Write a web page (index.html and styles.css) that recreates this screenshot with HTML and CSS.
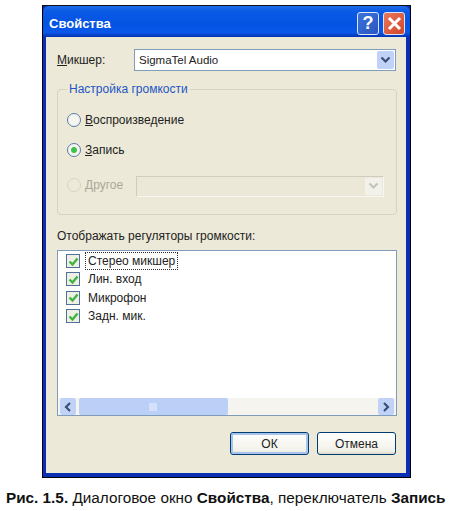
FILE: index.html
```html
<!DOCTYPE html>
<html lang="ru">
<head>
  <meta charset="UTF-8" />
  <title>Свойства</title>
  <link rel="stylesheet" href="styles.css">
</head>
<body>
  <div class="window">
    <div class="titlebar">
      <span class="title">Свойства</span>
      <span class="cap-btn help">?</span>
      <span class="cap-btn close">
        <svg width="15" height="15" viewBox="0 0 15 15"><path d="M2 2 L13 13 M13 2 L2 13" stroke="#fff" stroke-width="3"/></svg>
      </span>
    </div>
    <div class="client">
      <div class="mixer-row">
        <span class="mixer-label"><u>М</u>икшер:</span>
        <div class="combo">
          <span class="combo-text">SigmaTel Audio</span>
          <span class="combo-arrow">
            <svg width="11" height="8" viewBox="0 0 11 8"><path d="M1.5 1.5 L5.5 5.5 L9.5 1.5" fill="none" stroke="#3b4f74" stroke-width="2.2"/></svg>
          </span>
        </div>
      </div>

      <fieldset class="group">
        <legend>Настройка громкости</legend>
        <div class="radio-row first">
          <span class="radio"></span>
          <span><u>В</u>оспроизведение</span>
        </div>
        <div class="radio-row second">
          <span class="radio on"></span>
          <span><u>З</u>апись</span>
        </div>
        <div class="radio-row third disabled">
          <span class="radio"></span>
          <span class="other-label"><u>Д</u>ругое</span>
          <div class="combo-off">
            <span class="combo-off-arrow">
              <svg width="11" height="8" viewBox="0 0 11 8"><path d="M1.5 1.5 L5.5 5.5 L9.5 1.5" fill="none" stroke="#c4c4bc" stroke-width="2.2"/></svg>
            </span>
          </div>
        </div>
      </fieldset>

      <div class="list-label">Отображать регуляторы громкости:</div>
      <div class="list">
        <div class="list-items">
          <div class="item">
            <span class="check"><svg width="11" height="11" viewBox="0 0 11 11"><path d="M1.5 5.5 L4.5 8.5 L9.5 2.5" fill="none" stroke="#3fb53f" stroke-width="2.4"/></svg></span>
            <span class="item-text focused">Стерео микшер</span>
          </div>
          <div class="item">
            <span class="check"><svg width="11" height="11" viewBox="0 0 11 11"><path d="M1.5 5.5 L4.5 8.5 L9.5 2.5" fill="none" stroke="#3fb53f" stroke-width="2.4"/></svg></span>
            <span class="item-text">Лин. вход</span>
          </div>
          <div class="item">
            <span class="check"><svg width="11" height="11" viewBox="0 0 11 11"><path d="M1.5 5.5 L4.5 8.5 L9.5 2.5" fill="none" stroke="#3fb53f" stroke-width="2.4"/></svg></span>
            <span class="item-text">Микрофон</span>
          </div>
          <div class="item">
            <span class="check"><svg width="11" height="11" viewBox="0 0 11 11"><path d="M1.5 5.5 L4.5 8.5 L9.5 2.5" fill="none" stroke="#3fb53f" stroke-width="2.4"/></svg></span>
            <span class="item-text">Задн. мик.</span>
          </div>
        </div>
        <div class="scrollbar">
          <span class="sb-btn">
            <svg width="8" height="10" viewBox="0 0 8 10"><path d="M6 1 L2 5 L6 9" fill="none" stroke="#3b4f74" stroke-width="2.2"/></svg>
          </span>
          <span class="sb-thumb">
            <svg width="9" height="8" viewBox="0 0 9 8"><path d="M1 0 V8 M3 0 V8 M5 0 V8 M7 0 V8" stroke="#eef2fd" stroke-width="1"/></svg>
          </span>
          <span class="sb-track"></span>
          <span class="sb-btn">
            <svg width="8" height="10" viewBox="0 0 8 10"><path d="M2 1 L6 5 L2 9" fill="none" stroke="#3b4f74" stroke-width="2.2"/></svg>
          </span>
        </div>
      </div>

      <div class="buttons">
        <div class="btn default">ОК</div>
        <div class="btn">Отмена</div>
      </div>
    </div>
  </div>
  <p class="caption"><b>Рис. 1.5.</b> Диалоговое окно <b>Свойства</b>, переключатель <b>Запись</b></p>
</body>
</html>
```

FILE: styles.css
```css
html, body {
  margin: 0;
  padding: 0;
  background: #fff;
}
body {
  width: 453px;
  height: 511px;
  overflow: hidden;
  padding-top: 5px;
  box-sizing: border-box;
  font-family: "Liberation Sans", Arial, sans-serif;
  color: #222;
}
.window {
  width: 369px;
  height: 473px;
  margin-left: 42px;
  box-sizing: border-box;
  border: 1px solid #000;
  border-top-color: #111;
  display: flex;
  flex-direction: column;
  background: #0a2fb4;
}
.titlebar {
  height: 31px;
  flex: none;
  display: flex;
  align-items: center;
  gap: 4px;
  padding: 3px 5px 0 6px;
  box-sizing: border-box;
  background: linear-gradient(#1d6ce8 0%, #0a5ae6 18%, #0453e2 55%, #0a58ea 85%, #0333b0 100%);
  border-radius: 6px 6px 0 0;
}
.title {
  flex: 1;
  color: #fff;
  font-weight: bold;
  font-size: 13px;
}
.cap-btn {
  width: 22px;
  height: 23px;
  box-sizing: border-box;
  display: flex;
  align-items: center;
  justify-content: center;
  border: 1px solid #dce6f8;
  border-radius: 3px;
  color: #fff;
  font-weight: bold;
  font-size: 18px;
}
.help {
  background: linear-gradient(135deg, #3d74dc, #2a55c0);
}
.close {
  background: linear-gradient(135deg, #e8785a, #d2462a);
}
.client {
  flex: 1;
  margin: 0 4px 4px 3px;
  background: #ece9d8;
  padding: 11px 10px 0 11px;
  box-sizing: border-box;
  font-size: 12px;
}
.mixer-row {
  display: flex;
  align-items: center;
  height: 24px;
}
.mixer-label {
  width: 77px;
}
.combo {
  width: 262px;
  height: 22px;
  box-sizing: border-box;
  border: 1px solid #7f9db9;
  background: #fff;
  display: flex;
  align-items: center;
  justify-content: space-between;
  padding: 0 1px 0 4px;
}
.combo-text {
  font-size: 11.5px;
}
.combo-arrow {
  width: 17px;
  height: 18px;
  display: flex;
  align-items: center;
  justify-content: center;
  background: #c1d2f8;
  border-radius: 2px;
}
.group {
  margin: 10px 0 0 0;
  padding: 0 12px 0 9px;
  width: 340px;
  height: 133px;
  box-sizing: border-box;
  border: 1px solid #d6d3c2;
  border-radius: 4px;
}
.group legend {
  color: #1f55c4;
  padding: 0 2px;
  margin-left: 0;
  font-size: 12px;
}
.radio-row {
  display: flex;
  align-items: center;
  gap: 4px;
  height: 16px;
}
.first {
  margin-top: 16px;
}
.second {
  margin-top: 14px;
}
.third {
  margin-top: 19px;
}
.radio {
  width: 14px;
  height: 14px;
  box-sizing: border-box;
  flex: none;
  border: 1px solid #5a7aa8;
  border-radius: 50%;
  background: #f6f6f0;
}
.radio.on {
  background: radial-gradient(circle, #3cc24a 0 2.5px, #f6f6f0 3.5px);
}
.disabled {
  color: #aca899;
}
.disabled .radio {
  border-color: #d8d5c5;
  background: #ece9d8;
}
.other-label {
  width: 47px;
}
.combo-off {
  width: 248px;
  height: 21px;
  margin-top: 2px;
  flex: none;
  box-sizing: border-box;
  border: 1px solid #d0cdbc;
  border-right-color: #f7f6f0;
  border-bottom-color: #f7f6f0;
  background: #ebe8d8;
  display: flex;
  justify-content: flex-end;
  align-items: center;
  padding-right: 1px;
}
.combo-off-arrow {
  width: 17px;
  height: 17px;
  display: flex;
  align-items: center;
  justify-content: center;
  background: #f2f1ea;
}
.list-label {
  margin: 14px 0 0 0;
  height: 15px;
  line-height: 15px;
}
.list {
  margin: 6px 0 0 0;
  width: 340px;
  height: 166px;
  box-sizing: border-box;
  border: 1px solid #7f9db9;
  background: #fff;
  display: flex;
  flex-direction: column;
}
.list-items {
  flex: 1;
  padding: 1px 0 0 8px;
}
.item {
  display: flex;
  align-items: center;
  gap: 5px;
  height: 18.3px;
}
.check {
  width: 14px;
  height: 14px;
  flex: none;
  box-sizing: border-box;
  border: 1px solid #52709a;
  background: #eef0e4;
  display: flex;
  align-items: center;
  justify-content: center;
}
.item-text {
  padding: 1px 2px;
  border: 1px solid transparent;
}
.focused {
  border: 1px dotted #333;
}
.scrollbar {
  height: 17px;
  flex: none;
  display: flex;
  padding: 0 2px;
  background: #f5f4ee;
}
.sb-btn {
  width: 16px;
  flex: none;
  display: flex;
  align-items: center;
  justify-content: center;
  background: #c1d2f8;
  border-radius: 2px;
}
.sb-thumb {
  width: 149px;
  margin-left: 3px;
  display: flex;
  align-items: center;
  justify-content: center;
  background: #bccff7;
  border-radius: 2px;
}
.sb-track {
  flex: 1;
}
.buttons {
  display: flex;
  justify-content: flex-end;
  gap: 8px;
  margin-top: 16px;
}
.btn {
  width: 79px;
  height: 23px;
  box-sizing: border-box;
  border: 1px solid #003c74;
  border-radius: 3px;
  background: linear-gradient(#fff, #f2f1e8 85%, #dcd8c8);
  display: flex;
  align-items: center;
  justify-content: center;
}
.btn.default {
  box-shadow: inset 0 0 0 2px #a8c4ec;
}
.caption {
  margin: 11px 0 0 6px;
  font-size: 15.3px;
  white-space: nowrap;
  color: #111;
}
```
